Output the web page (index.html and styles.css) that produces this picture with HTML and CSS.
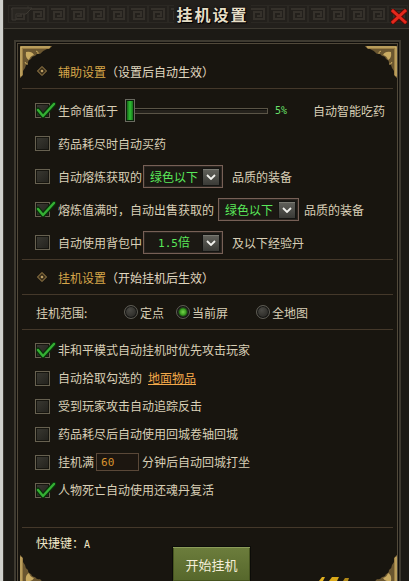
FILE: index.html
```html
<!DOCTYPE html>
<html lang="zh">
<head>
<meta charset="utf-8">
<title>挂机设置</title>
<link rel="stylesheet" href="styles.css">
</head>
<body>
<div class="screen">
  <div class="edge"></div>
  <div class="main">
    <div class="topbar"><div class="redbar"></div></div>
    <div class="window">
      <div class="titlebar">
        <svg class="title-pattern" width="400" height="18" viewBox="0 0 400 18">
          <defs>
            <pattern id="key" width="20" height="18" patternUnits="userSpaceOnUse">
              <rect x="0.5" y="0.5" width="19" height="17" fill="none" stroke="#2b2823" stroke-width="1"/>
              <path d="M3 4H16V14H6V7H13V11H9" fill="none" stroke="#35312b" stroke-width="2"/>
            </pattern>
          </defs>
          <rect width="400" height="18" fill="url(#key)"/>
          <path d="M6 3H24L18 9H8V15H4V3Z" fill="#2a2722" stroke="#3d3932" stroke-width="1"/>
        </svg>
        <span class="title">挂机设置</span>
        <svg class="close" width="16" height="15" viewBox="0 0 16 15">
          <path d="M2 2L14 13M14 2L2 13" stroke="#5a0a06" stroke-width="5" stroke-linecap="square"/>
          <path d="M2 2L14 13M14 2L2 13" stroke="#e4281c" stroke-width="3" stroke-linecap="square"/>
        </svg>
      </div>
      <div class="frame">
        <div class="panel">
          <svg class="corner tl" viewBox="0 0 32 32"><path d="M0 0H32L29 3H3V29L0 32Z" fill="#9a7e44"/><path d="M3 3H27Q22 5 20 8Q17 7 15 10Q12 10 11 13Q8 14 8 17Q5 19 5 22L3 25Z" fill="#6a5630"/><path d="M6 6Q12 5 14 9Q10 10 9 14Q5 12 6 6Z" fill="#c9ab62"/><path d="M16 5Q19 6 18 8M5 16Q6 19 8 18" stroke="#c9ab62" fill="none"/><path d="M1 1H30M1 1V30" stroke="#d8bc72" stroke-width="1"/></svg>
          <svg class="corner tr" viewBox="0 0 32 32"><path d="M0 0H32L29 3H3V29L0 32Z" fill="#9a7e44"/><path d="M3 3H27Q22 5 20 8Q17 7 15 10Q12 10 11 13Q8 14 8 17Q5 19 5 22L3 25Z" fill="#6a5630"/><path d="M6 6Q12 5 14 9Q10 10 9 14Q5 12 6 6Z" fill="#c9ab62"/><path d="M16 5Q19 6 18 8M5 16Q6 19 8 18" stroke="#c9ab62" fill="none"/><path d="M1 1H30M1 1V30" stroke="#d8bc72" stroke-width="1"/></svg>
          <svg class="corner bl" viewBox="0 0 32 32"><path d="M0 0H32L29 3H3V29L0 32Z" fill="#9a7e44"/><path d="M3 3H27Q22 5 20 8Q17 7 15 10Q12 10 11 13Q8 14 8 17Q5 19 5 22L3 25Z" fill="#6a5630"/><path d="M6 6Q12 5 14 9Q10 10 9 14Q5 12 6 6Z" fill="#c9ab62"/><path d="M1 1H30M1 1V30" stroke="#d8bc72" stroke-width="1"/></svg>
          <svg class="corner br" viewBox="0 0 32 32"><path d="M0 0H32L29 3H3V29L0 32Z" fill="#9a7e44"/><path d="M3 3H27Q22 5 20 8Q17 7 15 10Q12 10 11 13Q8 14 8 17Q5 19 5 22L3 25Z" fill="#6a5630"/><path d="M6 6Q12 5 14 9Q10 10 9 14Q5 12 6 6Z" fill="#c9ab62"/><path d="M1 1H30M1 1V30" stroke="#d8bc72" stroke-width="1"/></svg>

          <div class="sec-head first">
            <svg class="diamond" width="10" height="10" viewBox="0 0 10 10"><path d="M5 0.5L9.5 5L5 9.5L0.5 5Z" fill="#3a2e1a" stroke="#a88a50"/><path d="M5 3.5L6.5 5L5 6.5L3.5 5Z" fill="#d0b070"/></svg>
            <span class="gold">辅助设置</span><span class="note">（设置后自动生效）</span>
          </div>
          <div class="sec-body">
            <div class="row">
              <span class="cb"><svg class="tick" viewBox="0 0 20 16"><polyline points="2,8 7,14 18,2" fill="none" stroke="#0b300b" stroke-width="5" stroke-linecap="round" stroke-linejoin="round"/><polyline points="2,8 7,14 18,2" fill="none" stroke="#34b034" stroke-width="2.4" stroke-linecap="round" stroke-linejoin="round"/></svg></span>
              <span class="label">生命值低于</span>
              <div class="slider"><div class="track"></div><div class="thumb"></div></div>
              <span class="pct">5%</span>
              <span class="label after-pct">自动智能吃药</span>
            </div>
            <div class="row">
              <span class="cb"></span>
              <span class="label">药品耗尽时自动买药</span>
            </div>
            <div class="row">
              <span class="cb"></span>
              <span class="label">自动熔炼获取的</span>
              <div class="dropdown dd-a"><span class="dd-text">绿色以下</span><span class="dd-btn"><svg width="10" height="6" viewBox="0 0 10 6"><path d="M1 1L5 5L9 1" fill="none" stroke="#f2f2ee" stroke-width="1.8"/></svg></span></div>
              <span class="label after-dd">品质的装备</span>
            </div>
            <div class="row">
              <span class="cb"><svg class="tick" viewBox="0 0 20 16"><polyline points="2,8 7,14 18,2" fill="none" stroke="#0b300b" stroke-width="5" stroke-linecap="round" stroke-linejoin="round"/><polyline points="2,8 7,14 18,2" fill="none" stroke="#34b034" stroke-width="2.4" stroke-linecap="round" stroke-linejoin="round"/></svg></span>
              <span class="label">熔炼值满时，自动出售获取的</span>
              <div class="dropdown dd-b"><span class="dd-text">绿色以下</span><span class="dd-btn"><svg width="10" height="6" viewBox="0 0 10 6"><path d="M1 1L5 5L9 1" fill="none" stroke="#f2f2ee" stroke-width="1.8"/></svg></span></div>
              <span class="label after-dd-b">品质的装备</span>
            </div>
            <div class="row">
              <span class="cb"></span>
              <span class="label">自动使用背包中</span>
              <div class="dropdown dd-a"><span class="dd-text centered"><span class="mono">1.5</span>倍</span><span class="dd-btn"><svg width="10" height="6" viewBox="0 0 10 6"><path d="M1 1L5 5L9 1" fill="none" stroke="#f2f2ee" stroke-width="1.8"/></svg></span></div>
              <span class="label after-dd">及以下经验丹</span>
            </div>
          </div>

          <div class="sec-head">
            <svg class="diamond" width="10" height="10" viewBox="0 0 10 10"><path d="M5 0.5L9.5 5L5 9.5L0.5 5Z" fill="#3a2e1a" stroke="#a88a50"/><path d="M5 3.5L6.5 5L5 6.5L3.5 5Z" fill="#d0b070"/></svg>
            <span class="gold">挂机设置</span><span class="note">（开始挂机后生效）</span>
          </div>
          <div class="range-row">
            <span class="range-label">挂机范围:</span>
            <div class="radios">
              <span class="radio-item"><span class="radio"></span>定点</span>
              <span class="radio-item wide"><span class="radio on"></span>当前屏</span>
              <span class="radio-item"><span class="radio"></span>全地图</span>
            </div>
          </div>

          <div class="list">
            <div class="row">
              <span class="cb"><svg class="tick" viewBox="0 0 20 16"><polyline points="2,8 7,14 18,2" fill="none" stroke="#0b300b" stroke-width="5" stroke-linecap="round" stroke-linejoin="round"/><polyline points="2,8 7,14 18,2" fill="none" stroke="#34b034" stroke-width="2.4" stroke-linecap="round" stroke-linejoin="round"/></svg></span>
              <span class="label">非和平模式自动挂机时优先攻击玩家</span>
            </div>
            <div class="row">
              <span class="cb"></span>
              <span class="label">自动拾取勾选的</span>
              <a class="link">地面物品</a>
            </div>
            <div class="row">
              <span class="cb"></span>
              <span class="label">受到玩家攻击自动追踪反击</span>
            </div>
            <div class="row">
              <span class="cb"></span>
              <span class="label">药品耗尽后自动使用回城卷轴回城</span>
            </div>
            <div class="row">
              <span class="cb"></span>
              <span class="label">挂机满</span>
              <span class="num-input">60</span>
              <span class="label after-input">分钟后自动回城打坐</span>
            </div>
            <div class="row">
              <span class="cb"><svg class="tick" viewBox="0 0 20 16"><polyline points="2,8 7,14 18,2" fill="none" stroke="#0b300b" stroke-width="5" stroke-linecap="round" stroke-linejoin="round"/><polyline points="2,8 7,14 18,2" fill="none" stroke="#34b034" stroke-width="2.4" stroke-linecap="round" stroke-linejoin="round"/></svg></span>
              <span class="label">人物死亡自动使用还魂丹复活</span>
            </div>
          </div>

          <div class="footer">
            <div class="hotkey">快捷键：<span class="key">A</span></div>
            <div class="start">开始挂机</div>
          </div>
        </div>
      </div>
    </div>
  </div>
  <svg class="gold-bit" width="40" height="6" viewBox="0 0 40 6"><path d="M2 6L5 2H8L6 6Z" fill="#e0b020"/><path d="M12 6L15 2H22L20 6Z" fill="#d8a818"/><path d="M26 6L28 3H32L31 6Z" fill="#b08818"/></svg>
</div>
</body>
</html>
```
FILE: styles.css
```css
* { box-sizing: border-box; margin: 0; padding: 0; }
html, body { width: 409px; height: 581px; overflow: hidden; }
body {
  background: #161410;
  font-family: "Noto Sans CJK SC", "Liberation Sans", sans-serif;
  font-size: 12px;
  color: #d8cfb6;
}
.screen { display: flex; height: 581px; position: relative; }
.edge { width: 3px; flex: none; background: #cfd0cc; }
.main { flex: 1; min-width: 0; display: flex; flex-direction: column; }
.topbar { height: 4px; display: flex; background: #1c1a18; }
.redbar { width: 180px; background: #4e1410; }

.window {
  flex: 1;
  display: flex;
  flex-direction: column;
  background: #1f1c18;
  border-left: 1px solid #3a3731;
}
.titlebar {
  height: 28px;
  position: relative;
  display: flex;
  align-items: center;
  justify-content: center;
  padding-left: 12px;
  background: #23201c;
}
.title-pattern { position: absolute; left: 4px; top: 5px; }
.title {
  position: relative;
  font-size: 16px;
  font-weight: 700;
  letter-spacing: 2px;
  color: #e6dec6;
  text-shadow: 1px 1px 0 #000, 0 0 3px #000;
  line-height: 20px;
  background: #23201c;
  padding: 0 2px;
}
.close { position: absolute; right: 2px; top: 9px; }

.frame {
  flex: 1;
  border-top: 1px solid #3e3a32;
  padding: 14px 11px 0 13px;
  background: #1c1a15;
}
.panel {
  position: relative;
  height: 545px;
  padding: 0 4px;
  background: #18150f;
  border: 1px solid #51493a;
  box-shadow: 0 0 0 1px #100e0b, 0 0 0 3px #3e3a30;
}
.corner { position: absolute; width: 32px; height: 32px; }
.corner.tl { left: 2px; top: 2px; }
.corner.tr { right: 0; top: 2px; transform: scaleX(-1); }
.corner.bl { left: 2px; bottom: 0; transform: scaleY(-1); }
.corner.br { right: 0; bottom: 0; transform: scale(-1, -1); }

.sec-head {
  height: 35px;
  display: flex;
  align-items: center;
  padding-left: 15px;
  border-bottom: 1px solid #44382a;
}
.sec-head.first { margin-top: 10px; }
.diamond { margin-right: 11px; flex: none; }
.gold { color: #d6a64a; }
.note { color: #e0d8c0; }

.sec-body {
  padding-top: 5px;
  border-bottom: 1px solid #44382a;
}
.row {
  height: 33px;
  display: flex;
  align-items: center;
  padding-left: 13px;
  white-space: nowrap;
}
.cb {
  position: relative;
  width: 15px;
  height: 15px;
  flex: none;
  margin-right: 8px;
  border: 1px solid #676150;
  background: linear-gradient(135deg, #3b3a33, #22211c);
  box-shadow: inset 0 0 0 1px #16150f;
}
.tick { position: absolute; left: 0; top: -2px; width: 20px; height: 16px; }
.label { line-height: 16px; }

.slider { position: relative; width: 143px; height: 23px; margin-left: 7px; display: flex; align-items: center; }
.track {
  margin-left: 4px;
  flex: 1;
  height: 6px;
  background: #24211b;
  border: 1px solid #5a5446;
  box-shadow: inset 0 1px 0 #0e0d0a;
}
.thumb {
  position: absolute;
  left: 0;
  top: 0;
  width: 10px;
  height: 23px;
  border: 1px solid #6a6a60;
  background: linear-gradient(90deg, #0e4a10, #2fbf33 50%, #0e5a12);
  box-shadow: inset 0 0 0 1px #0a200a;
}
.pct {
  margin-left: 7px;
  font-family: "DejaVu Sans Mono", monospace;
  font-size: 10px;
  color: #6ae06a;
}
.after-pct { margin-left: 26px; }

.dropdown {
  height: 23px;
  display: flex;
  align-items: center;
  border: 1px solid #776056;
  box-shadow: inset 0 0 0 1px #2b2520;
  background: #1b1813;
  flex: none;
}
.dd-a { width: 80px; margin-left: 1px; }
.dd-b { width: 81px; margin-left: 4px; }
.dd-text { flex: 1; padding-left: 6px; color: #5ae85a; font-size: 12px; line-height: 16px; }
.dd-text.centered { text-align: center; padding-left: 2px; }
.mono { font-family: "DejaVu Sans Mono", monospace; font-size: 11px; }
.dd-btn {
  width: 18px;
  height: 18px;
  margin-right: 2px;
  display: flex;
  align-items: center;
  justify-content: center;
  border: 1px solid #141412;
  background: linear-gradient(#62625c, #3a3a36);
  box-shadow: inset 0 1px 0 #7a7a72;
}
.after-dd { margin-left: 9px; }
.after-dd-b { margin-left: 5px; }

.range-row {
  height: 35px;
  display: flex;
  align-items: center;
  padding-left: 14px;
  border-bottom: 1px solid #44382a;
}
.range-label { width: 88px; flex: none; }
.radios { display: flex; align-items: center; }
.radio-item { display: flex; align-items: center; width: 52px; }
.radio-item.wide { width: 80px; }
.radio {
  width: 14px;
  height: 14px;
  border-radius: 50%;
  margin-right: 2px;
  flex: none;
  border: 1px solid #5e5c54;
  background: radial-gradient(circle at 40% 35%, #4a4944, #1f1e1b);
  box-shadow: inset 0 0 0 1px #141412;
}
.radio.on {
  background: radial-gradient(circle, #74d64a 0, #3b9a22 3px, #1c5a10 4px, #2a2a26 5px, #1f1e1b 7px);
}

.list {
  padding-top: 6px;
  padding-bottom: 23px;
  border-bottom: 1px solid #44382a;
}
.list .row { height: 28px; }
.link {
  margin-left: 6px;
  color: #f2a84a;
  text-decoration: underline;
  line-height: 16px;
}
.num-input {
  width: 43px;
  height: 18px;
  margin-left: 2px;
  padding-left: 4px;
  display: flex;
  align-items: center;
  border: 1px solid #5a4838;
  background: #1c1610;
  color: #d8922e;
  font-family: "DejaVu Sans Mono", monospace;
  font-size: 11px;
}
.after-input { margin-left: 3px; }

.footer { padding-left: 14px; }
.hotkey {
  margin-top: 8px;
  height: 14px;
  line-height: 14px;
  color: #f0e8c8;
}
.key { font-family: "DejaVu Sans Mono", monospace; font-size: 10px; }
.start {
  margin-top: -4px;
  margin-left: 136px;
  width: 79px;
  height: 36px;
  display: flex;
  align-items: center;
  justify-content: center;
  border: 1px solid #0c0c08;
  background: linear-gradient(#6c7d3c, #56672b);
  box-shadow: inset 0 1px 0 #8c9c5a, inset 0 0 0 1px #46541f;
  color: #f4eed8;
  font-size: 13px;
}
.gold-bit { position: absolute; left: 317px; top: 575px; }
```
